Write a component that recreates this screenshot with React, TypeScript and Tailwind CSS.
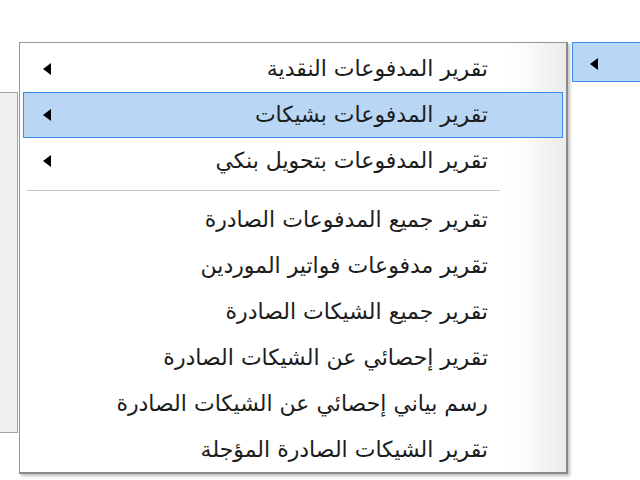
import React from "react";

const Arrow = () => (
  <svg width="8" height="12" viewBox="0 0 8 12" className="shrink-0">
    <polygon points="8,0 8,12 0,6" fill="#000" />
  </svg>
);

const subItems = [
  "تقرير المدفوعات النقدية",
  "تقرير المدفوعات بشيكات",
  "تقرير المدفوعات بتحويل بنكي",
];

const items = [
  "تقرير جميع المدفوعات الصادرة",
  "تقرير مدفوعات فواتير الموردين",
  "تقرير جميع الشيكات الصادرة",
  "تقرير إحصائي عن الشيكات الصادرة",
  "رسم بياني إحصائي عن الشيكات الصادرة",
  "تقرير الشيكات الصادرة المؤجلة",
];

const Row = ({ label, sub, active }: { label: string; sub?: boolean; active?: boolean }) => (
  <div
    className={`flex h-[46px] items-center justify-between pr-[74px] pl-[19px] border ${
      active ? "bg-[#b9d7f4] border-[#3a8de4]" : "border-transparent"
    }`}
  >
    <span className="text-[22px] leading-none text-[#1c1c1c] whitespace-nowrap">{label}</span>
    {sub && <Arrow />}
  </div>
);

export default function App() {
  return (
    <div
      className="flex items-start h-[480px] w-[640px] overflow-hidden bg-white pt-[42px]"
      style={{ fontFamily: '"DejaVu Sans", sans-serif' }}
    >
      {/* window behind */}
      <div className="mt-[50px] h-[341px] w-[18px] shrink-0 border-y border-r border-[#a3a3a3] bg-[#f0f0f0]" />

      {/* submenu */}
      <div
        dir="rtl"
        className="ml-px h-[432px] w-[549px] shrink-0 border border-[#979797] border-r-2 border-b-2 border-r-[#8a8a8a] border-b-[#8a8a8a] p-[3px] shadow-[2px_2px_3px_rgba(0,0,0,0.25)] bg-[linear-gradient(to_left,#ebebeb_0,#fafafa_40px,#ffffff_60px)]"
      >
        {subItems.map((t, i) => (
          <Row key={t} label={t} sub active={i === 1} />
        ))}
        <div className="flex h-[13px] items-center">
          <div className="mr-[63px] ml-[4px] h-px flex-1 bg-[#c4c4c4]" />
        </div>
        {items.map((t) => (
          <Row key={t} label={t} />
        ))}
      </div>

      {/* parent menu item */}
      <div className="ml-[4px] flex h-[40px] flex-1 items-center border border-r-0 border-[#3a8de4] bg-[#b9d7f4] pl-[17px] pt-[3px]">
        <Arrow />
      </div>
    </div>
  );
}
